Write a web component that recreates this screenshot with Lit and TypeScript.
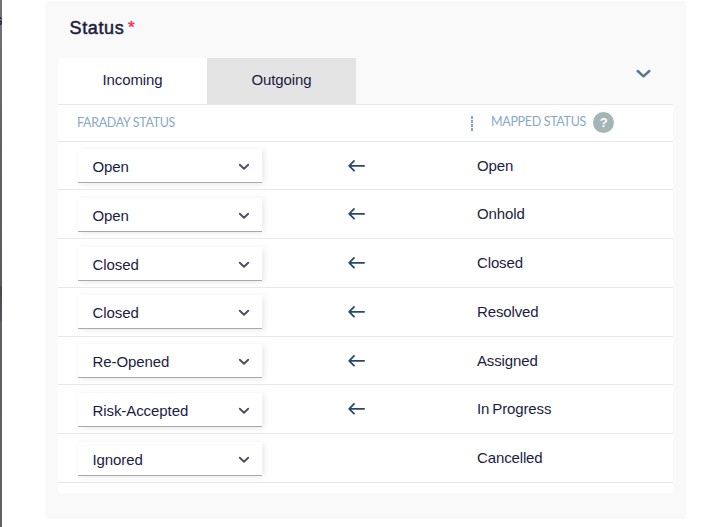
import { LitElement, html, css, nothing } from "lit";
import { customElement } from "lit/decorators.js";

interface Mapping { from: string; to: string; arrow: boolean; }

const MAPPINGS: Mapping[] = [
  { from: "Open", to: "Open", arrow: true },
  { from: "Open", to: "Onhold", arrow: true },
  { from: "Closed", to: "Closed", arrow: true },
  { from: "Closed", to: "Resolved", arrow: true },
  { from: "Re-Opened", to: "Assigned", arrow: true },
  { from: "Risk-Accepted", to: "In Progress", arrow: true },
  { from: "Ignored", to: "Cancelled", arrow: false },
];

@customElement("app-root")
export class AppRoot extends LitElement {
  static styles = css`
    :host { display: flex; height: 527px; overflow: hidden; background: #fff; color: #1b1c43;
      font: 15px/20px "Liberation Sans", Arial, sans-serif; letter-spacing: -0.08px; }
    * { box-sizing: border-box; }
    .edge { flex: none; width: 2px; height: 527px; overflow: hidden; padding-top: 11px;
      background: linear-gradient(#737373 0, #626262 150px, #5b5b5b 286px, #464b50 286px, #50565a 321px, #606060 321px, #616161 100%);
      color: #17183c; font-size: 15px; line-height: 18px; }
    .edge span { display: block; margin-left: -5px; }
    .panel { flex: none; width: 641px; height: 518px; margin: 1px 0 0 43px; padding: 0 13px;
      background: #f9f9f9; border-radius: 4px; }
    .title { display: flex; gap: 3.5px; height: 57px; padding: 16px 0 0 11.5px; font-size: 18px; line-height: 22px; }
    h2 { margin: 0; font: inherit; -webkit-text-stroke: 0.5px currentColor; letter-spacing: 0.65px; }
    .required { color: #f0325a; font-size: 17px; -webkit-text-stroke: 0.4px currentColor; }
    .tabs { display: flex; height: 46px; }
    .tab { width: 149px; line-height: 44px; text-align: center; }
    .active { background: #fff; }
    .idle { background: #e4e4e4; }
    .collapse { display: block; margin: 11px 22px 0 auto; }
    .table { height: 389px; background: #fff; border-top: 1px solid #e7e8e9; }
    .head { display: flex; align-items: center; height: 36.6px; border-bottom: 1px solid #e7e8e9;
      color: #8aa9c3; font: 12.5px/18px Lato, sans-serif; letter-spacing: -0.33px; }
    .from-title { width: 393px; padding-left: 19px; }
    .to-title { padding-bottom: 2px; }
    .grip { flex: none; margin: 0 17px 0 19px; }
    .help { display: flex; align-items: center; justify-content: center; width: 21px; height: 21px;
      margin-left: 7px; border-radius: 50%; background: #a3b5b5; color: #fff;
      font: bold 13px/21px "Liberation Sans", sans-serif; }
    .row { display: flex; height: 48.75px; border-bottom: 1px solid #e7e8e9; }
    .select { display: flex; width: 184px; height: 34px; margin: 7.6px 0 0 20px; padding: 0 12px 0 14.5px;
      line-height: 35.2px; justify-content: space-between; border-bottom: 1px solid #a9a9ab;
      box-shadow: 2px 1px 6px rgba(0, 0, 0, 0.09); background: #fff; }
    .select svg { margin-top: 13.9px; }
    .arrow { width: 215px; padding: 16px 0 0 85px; }
    .arrow svg { display: block; }
    .to { line-height: 47.6px; letter-spacing: -0.13px; word-spacing: -1px; }
  `;

  private chevron() {
    return html`<svg width="12" height="8" viewBox="0 0 12 8" fill="none" stroke="#4b5363" stroke-width="1.9"
      stroke-linecap="round" stroke-linejoin="round"><path d="M1.8 1.7 6 5.7l4.2-4"/></svg>`;
  }

  private arrow() {
    return html`<svg width="19" height="15" viewBox="0 0 19 15" fill="none" stroke="#27496d" stroke-width="1.8"
      stroke-linecap="round" stroke-linejoin="round"><path d="M17.1 7.8H2.2M7 2.9 2.2 7.8 7 12.7"/></svg>`;
  }

  render() {
    return html`
      <div class="edge"><span>s</span></div>
      <section class="panel">
        <div class="title"><h2>Status</h2><span class="required">*</span></div>
        <div class="tabs">
          <div class="tab active">Incoming</div>
          <div class="tab idle">Outgoing</div>
          <svg class="collapse" width="15" height="10" viewBox="0 0 15 10" fill="none" stroke="#5d7593"
            stroke-width="2.5" stroke-linecap="round" stroke-linejoin="round"><path d="m1.7 2 5.8 5.3L13.3 2"/></svg>
        </div>
        <div class="table">
          <div class="head">
            <span class="from-title">FARADAY STATUS</span>
            <svg class="grip" width="4" height="16" viewBox="0 0 4 16" fill="#86a4bb">
              <path d="M1 1h2v3H1zM1 5h2v3H1zM1 9h2v3H1zM1 13h2v3H1z"/></svg>
            <span class="to-title">MAPPED STATUS</span><span class="help">?</span>
          </div>
          ${MAPPINGS.map((m) => html`
            <div class="row">
              <div class="select"><span>${m.from}</span>${this.chevron()}</div>
              <div class="arrow">${m.arrow ? this.arrow() : nothing}</div>
              <div class="to">${m.to}</div>
            </div>`)}
        </div>
      </section>`;
  }
}
